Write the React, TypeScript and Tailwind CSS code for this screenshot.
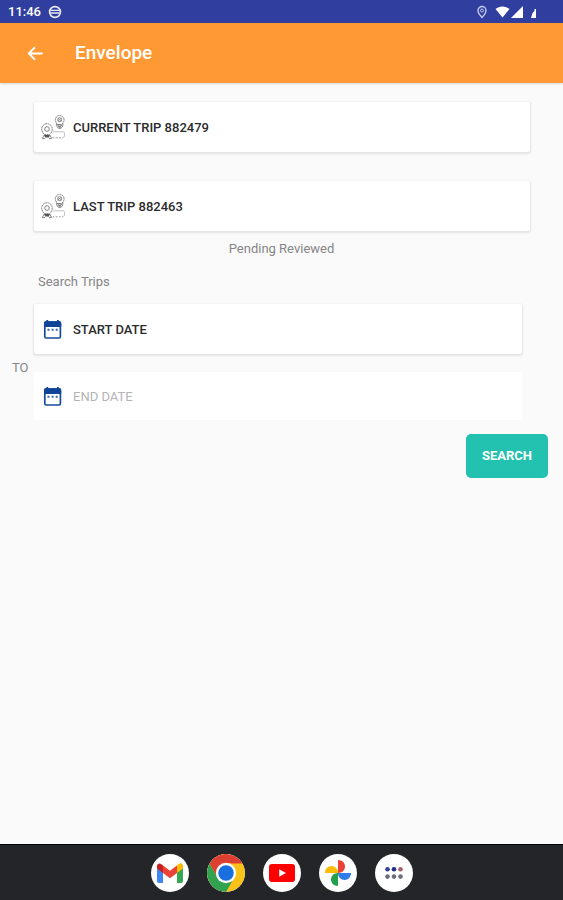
import type { ReactNode } from "react";

function RouteIcon() {
  return (
    <svg viewBox="0 0 24 26" className="h-[26px] w-6 shrink-0" fill="none" stroke="#777" strokeWidth="0.9">
      <path d="M3.4 19.6C1.600 18 .7 16 .7 14a5.300 5.300 0 0 1 10.600 0c0 2-.9 4-2.700 5.600z" strokeDasharray="2 0.5" />
      <circle cx="6" cy="14" r="2.300" />
      <path d="M3 20.200l-1.600 3.400M9 20.200l1.600 3.400M1.400 23.600h2.600M8 23.600h2.600" />
      <path d="M3.200 20.600h5.600M4 22l4-1.200M4 20.800l4 1.400" stroke="#555" strokeWidth="1.300" />
      <path d="M15.200 7.600c-.6-1-.9-1.800-.9-2.700a4.400 4.400 0 0 1 8.800 0c0 .9-.3 1.700-.9 2.700l-3.500 5.400z" strokeDasharray="2 0.4" />
      <circle cx="18.700" cy="4.700" r="2" />
      <path d="M16.600 3.200l4 3M20.600 3.200l-4 3" strokeWidth="0.600" />
      <path d="M15.500 8.500c0 3.200 1 5 3.200 5s3.200-1.800 3.200-5M16.800 9.500h3.800M17.200 10.500l3 1.600M20.200 10.500l-3 1.600" />
      <path d="M12 16.800h10c1 0 1.500.5 1.500 1.400v2.600c0 1-.5 1.500-1.500 1.500" stroke="#aaa" strokeWidth="0.700" />
      <path d="M11.500 22.800H22" stroke="#999" strokeDasharray="2 1.200" />
    </svg>
  );
}

function CalendarIcon() {
  return (
    <svg viewBox="0 0 24 24" className="h-6 w-6 shrink-0">
      <rect x="3.800" y="4" width="15.600" height="16" rx="1.400" fill="#fff" stroke="#174a9a" strokeWidth="1.700" />
      <path d="M3 9V4.900c0-1 .7-1.700 1.700-1.700h13.800c1 0 1.700.7 1.700 1.700V9z" fill="#0f4496" />
      <path d="M6.300 2v3M16.900 2v3" stroke="#0f4496" strokeWidth="1.800" />
      <path d="M6.500 10.800h2v1.900h-2zM10.600 10.800h2v1.900h-2zM14.700 10.800h2v1.900h-2z" fill="#3568b0" />
    </svg>
  );
}

function GmailIcon() {
  return (
    <svg viewBox="0 0 26 20" className="h-5 w-[26px]">
      <path d="M0 3v15c0 1.100.8 2 2 2h4V8z" fill="#4285f4" />
      <path d="M26 3v15c0 1.100-.8 2-2 2h-4V8z" fill="#34a853" />
      <path d="M20 2.400V10l6-4.500V3c0-2.600-2.600-3.600-4.500-2z" fill="#fbbc04" />
      <path d="M6 10V2.400L13 7.700l7-5.300V10l-7 5.300z" fill="#ea4335" />
      <path d="M0 3v2.500L6 10V2.400L4.500 1.200C2.600-.4 0 .6 0 3z" fill="#c5221f" />
    </svg>
  );
}

function ChromeIcon() {
  return (
    <svg viewBox="0 0 48 48" className="h-[38px] w-[38px]">
      <circle cx="24" cy="24" r="24" fill="#fbc116" />
      <path d="M24 24 13.600 30 3.200 12A24 24 0 0 0 24 48l10.400-18z" fill="#31a350" />
      <path d="M3.200 12a24 24 0 0 1 41.600 0H24v12l-10.400 6z" fill="#dd4032" />
      <circle cx="24" cy="24" r="12.800" fill="#fff" />
      <circle cx="24" cy="24" r="9.800" fill="#1a6fe0" />
    </svg>
  );
}

function YoutubeIcon() {
  return (
    <svg viewBox="0 0 26 18" className="h-[18px] w-[26px]">
      <rect width="26" height="18" rx="3" fill="#f00" />
      <path d="M10.200 5.200v7.600l6.800-3.800z" fill="#fff" />
    </svg>
  );
}

function PhotosIcon() {
  return (
    <svg viewBox="0 0 28 28" className="h-7 w-7">
      <path d="M14 14V1c4 0 7 2.800 7 6.500S18 14 14 14z" fill="#ea4335" />
      <path d="M14 14h13c0 4-2.800 7-6.500 7S14 18 14 14z" fill="#2f7de9" />
      <path d="M14 14v13c-4 0-7-2.800-7-6.500S10 14 14 14z" fill="#25a04b" />
      <path d="M14 14H1c0-4 2.800-7 6.500-7S14 10 14 14z" fill="#fbbc04" />
    </svg>
  );
}

function AppsIcon() {
  return (
    <svg viewBox="0 0 18 12" className="h-3 w-[18px]">
      <circle cx="2.500" cy="2.300" r="2.300" fill="#33408f" />
      <circle cx="9" cy="2.300" r="2.300" fill="#232d8c" />
      <circle cx="15.500" cy="2.300" r="2.300" fill="#a1626d" />
      <circle cx="2.500" cy="9.600" r="2.300" fill="#6d6d80" />
      <circle cx="9" cy="9.600" r="2.300" fill="#6d6d80" />
      <circle cx="15.500" cy="9.600" r="2.300" fill="#6d6d80" />
    </svg>
  );
}

function CardButton({ icon, children, disabled }: { icon: ReactNode; children: ReactNode; disabled?: boolean }) {
  return (
    <button
      type="button"
      disabled={disabled}
      className="flex h-[50px] w-full items-center gap-2 rounded-xs bg-white pt-px pl-[7px] text-left text-[13px] font-medium text-[#2b2b2b] shadow-[0_1px_2px_1px_rgba(0,0,0,0.09)] disabled:h-12 disabled:font-normal disabled:text-[#b4b4b4] disabled:shadow-none"
    >
      {icon}
      {children}
    </button>
  );
}

const dock = [
  { name: "Gmail", icon: <GmailIcon /> },
  { name: "Chrome", icon: <ChromeIcon /> },
  { name: "YouTube", icon: <YoutubeIcon /> },
  { name: "Photos", icon: <PhotosIcon /> },
  { name: "All apps", icon: <AppsIcon /> },
];

export default function App() {
  return (
    <div className="flex min-h-screen flex-col bg-[#fafafa] font-[Roboto,sans-serif] text-[13px] text-[#868686]">
      <div className="flex h-[23px] items-center justify-between bg-[#303f9f] pr-6 pl-2 text-white">
        <div className="flex items-center gap-[7px]">
          <span className="text-[13px] font-medium">11:46</span>
          <svg viewBox="0 0 14 14" className="h-[14px] w-[14px]" fill="none" stroke="#e8eaf8">
            <circle cx="7" cy="7" r="5.400" strokeWidth="1.700" />
            <path d="M2.500 5.400h9M2.500 8h9" strokeWidth="1.400" />
          </svg>
        </div>
        <svg viewBox="0 0 62 16" className="h-4 w-[62px]" fill="#fff">
          <path d="M5 2.500a4 4 0 0 1 4 4c0 2.800-4 7-4 7s-4-4.200-4-7a4 4 0 0 1 4-4z" fill="none" stroke="#c5caed" strokeWidth="1.400" />
          <circle cx="5" cy="6.500" r="1.500" fill="none" stroke="#c5caed" />
          <path d="M18.500 5c4-3.400 10-3.400 14 0l-7 8.500z" />
          <path d="M34 14 46 2v12z" />
          <path d="M54 14l1.500-5 2-2V5h1.500v9z" />
        </svg>
      </div>
      <header className="flex h-[60px] items-center gap-7 bg-[#ff9933] px-6 pt-px text-white shadow-[0_1px_2px_rgba(0,0,0,0.15)]">
        <button type="button" aria-label="Back">
          <svg viewBox="0 0 24 24" className="h-[23px] w-[23px]" fill="none" stroke="#fff" strokeWidth="2">
            <path d="M19.500 12H5M11.500 5.500 5 12l6.500 6.500" />
          </svg>
        </button>
        <h1 className="text-[19px] font-medium">Envelope</h1>
      </header>
      <main className="flex-1 pt-[19px]">
        <div className="flex flex-col gap-[29px] pr-[33px] pl-[34px]">
          <CardButton icon={<RouteIcon />}>CURRENT TRIP 882479</CardButton>
          <CardButton icon={<RouteIcon />}>LAST TRIP 882463</CardButton>
        </div>
        <p className="mt-2 text-center leading-5">Pending Reviewed</p>
        <h2 className="mt-[13px] pl-[38px] leading-5">Search Trips</h2>
        <div className="mt-3 flex items-center pr-[41px]">
          <span className="w-[34px] shrink-0 pt-3 pl-3">TO</span>
          <div className="flex flex-1 flex-col gap-[18px]">
            <CardButton icon={<CalendarIcon />}>START DATE</CardButton>
            <CardButton icon={<CalendarIcon />} disabled>
              END DATE
            </CardButton>
          </div>
        </div>
        <div className="mt-[14px] flex justify-end pr-[15px]">
          <button type="button" className="h-11 rounded-[5px] bg-[#22c1b0] px-4 text-[13px] font-bold text-white">
            SEARCH
          </button>
        </div>
      </main>
      <nav className="flex h-14 items-center justify-center gap-[18px] border-t border-black bg-[#242529]">
        {dock.map((app) => (
          <button
            key={app.name}
            type="button"
            aria-label={app.name}
            className="flex h-[38px] w-[38px] items-center justify-center overflow-hidden rounded-full bg-white"
          >
            {app.icon}
          </button>
        ))}
      </nav>
    </div>
  );
}
